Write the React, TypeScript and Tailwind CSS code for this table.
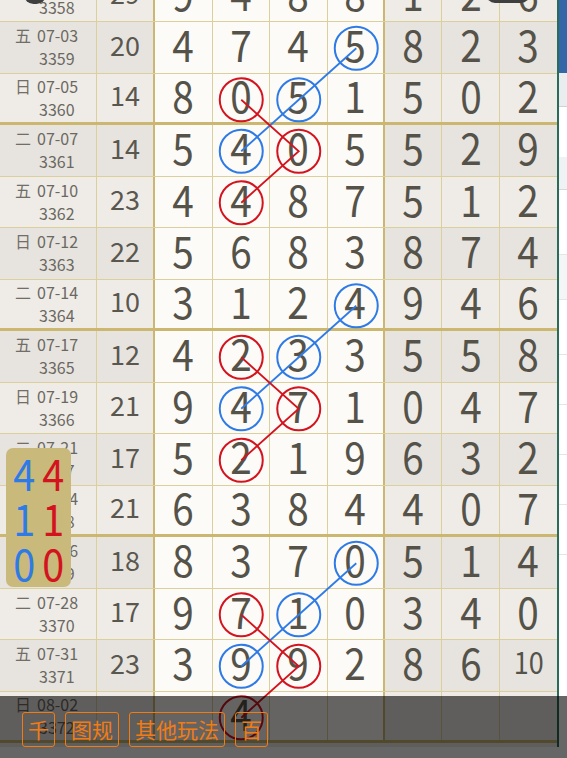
const ROW_H = 51.5;

type Row = { w: string; d: string; n: string; s: string; v: string[] };

const rows: Row[] = [
  { w: "二", d: "06-30", n: "3358", s: "29", v: ["9", "4", "8", "8", "1", "2", "6"] },
  { w: "五", d: "07-03", n: "3359", s: "20", v: ["4", "7", "4", "5", "8", "2", "3"] },
  { w: "日", d: "07-05", n: "3360", s: "14", v: ["8", "0", "5", "1", "5", "0", "2"] },
  { w: "二", d: "07-07", n: "3361", s: "14", v: ["5", "4", "0", "5", "5", "2", "9"] },
  { w: "五", d: "07-10", n: "3362", s: "23", v: ["4", "4", "8", "7", "5", "1", "2"] },
  { w: "日", d: "07-12", n: "3363", s: "22", v: ["5", "6", "8", "3", "8", "7", "4"] },
  { w: "二", d: "07-14", n: "3364", s: "10", v: ["3", "1", "2", "4", "9", "4", "6"] },
  { w: "五", d: "07-17", n: "3365", s: "12", v: ["4", "2", "3", "3", "5", "5", "8"] },
  { w: "日", d: "07-19", n: "3366", s: "21", v: ["9", "4", "7", "1", "0", "4", "7"] },
  { w: "二", d: "07-21", n: "3367", s: "17", v: ["5", "2", "1", "9", "6", "3", "2"] },
  { w: "五", d: "07-24", n: "3368", s: "21", v: ["6", "3", "8", "4", "4", "0", "7"] },
  { w: "日", d: "07-26", n: "3369", s: "18", v: ["8", "3", "7", "0", "5", "1", "4"] },
  { w: "二", d: "07-28", n: "3370", s: "17", v: ["9", "7", "1", "0", "3", "4", "0"] },
  { w: "五", d: "07-31", n: "3371", s: "23", v: ["3", "9", "9", "2", "8", "6", "10"] },
  { w: "日", d: "08-02", n: "3372", s: "", v: ["", "4", "", "", "", "", ""] },
];

const RED = "#d3141f";
const BLUE = "#2f7be6";

// [row, digit column, colour]
const marks: [number, number, string][] = [
  [1, 3, BLUE], [2, 1, RED], [2, 2, BLUE], [3, 1, BLUE], [3, 2, RED], [4, 1, RED],
  [6, 3, BLUE], [7, 1, RED], [7, 2, BLUE], [8, 1, BLUE], [8, 2, RED], [9, 1, RED],
  [11, 3, BLUE], [12, 1, RED], [12, 2, BLUE], [13, 1, BLUE], [13, 2, RED], [14, 1, RED],
];

const links: { c: string; pts: [number, number][] }[] = [
  { c: BLUE, pts: [[1, 3], [2, 2], [3, 1]] },
  { c: RED, pts: [[2, 1], [3, 2], [4, 1]] },
  { c: BLUE, pts: [[6, 3], [7, 2], [8, 1]] },
  { c: RED, pts: [[7, 1], [8, 2], [9, 1]] },
  { c: BLUE, pts: [[11, 3], [12, 2], [13, 1]] },
  { c: RED, pts: [[12, 1], [13, 2], [14, 1]] },
];

const cx = (c: number) => 155 + 57.5 * c + 28.75;
const cy = (r: number) => ROW_H * r + 25.75;

function TableRow({ row, i }: { row: Row; i: number }) {
  const dark = i % 2 === 1;
  const grey = dark ? "bg-[#e7e4e0]" : "bg-[#efece8]";
  const thick = i % 4 === 2;
  return (
    <div
      className={`grid h-[51.5px] grid-rows-1 grid-cols-[97px_58px_57.5px_57.5px_57.5px_57.5px_57.33px_57.33px_57.34px] ${
        thick ? "border-b-[3px] border-b-[#cbb76f]" : "border-b border-b-[#dbcf9c]"
      }`}
    >
      <div className={`flex flex-col justify-center border-r border-r-[#dbcf9c] pl-[15px] text-[16px] leading-[23px] text-[#6b6861] ${grey}`}>
        <div className="flex items-center gap-[6px]">
          <span className="text-[16px] text-[#716e67]">{row.w}</span>
          <span>{row.d}</span>
        </div>
        <div className="pl-[24px]">{row.n}</div>
      </div>
      <div className={`flex items-center justify-center border-r-2 border-r-[#cbb76f] pb-[5px] text-[27px] leading-[34px] text-[#5a574f] ${grey}`}>
        {row.s}
      </div>
      {row.v.map((d, j) => (
        <div
          key={j}
          className={`flex items-center justify-center pb-[8px] ${
            j === 3 ? "border-r-2 border-r-[#cbb76f]" : j === 6 ? "" : "border-r border-r-[#dbcf9c]"
          } ${j < 4 ? "bg-[#fdfbf8]" : grey}`}
        >
          <span
            className={`inline-block scale-x-[0.9] leading-[40px] text-[#555349] ${
              d.length > 1 ? "text-[30px]" : "text-[43px]"
            }`}
          >
            {d}
          </span>
        </div>
      ))}
    </div>
  );
}

export default function App() {
  return (
    <div className="relative h-[758px] w-[567px] overflow-hidden bg-[#efece8] font-['Noto_Sans_CJK_SC','Noto_Sans',sans-serif]">
      <div className="flex h-full">
        {/* chart */}
        <div className="relative w-[557px] shrink-0">
          <div className="relative -mt-[29.5px]">
            {rows.map((r, i) => (
              <TableRow key={r.n} row={r} i={i} />
            ))}
            <svg className="absolute left-0 top-0" width={557} height={ROW_H * rows.length}>
              {links.map((l, k) => (
                <polyline
                  key={k}
                  points={l.pts.map(([r, c]) => `${cx(c)},${cy(r)}`).join(" ")}
                  fill="none"
                  stroke={l.c}
                  strokeWidth={1.8}
                />
              ))}
              {marks.map(([r, c, col], k) => (
                <circle key={k} cx={cx(c)} cy={cy(r)} r={21.5} fill="none" stroke={col} strokeWidth={2} />
              ))}
            </svg>
          </div>
        </div>
        {/* page behind, right edge */}
        <div className="flex w-[10px] shrink-0 flex-col border-l-2 border-l-[#2b6b59] bg-white">
          <div className="h-[73px] shrink-0 bg-[#3467a8]" />
          <div className="h-[34px] shrink-0 border-b border-b-[#cfd3d7] bg-[#e9edf0]" />
          <div className="h-[50px] shrink-0 bg-white" />
          <div className="h-[33px] shrink-0 border-b border-b-[#d5d9dd] bg-[#eef2f5]" />
          <div className="h-[65px] shrink-0 border-b border-b-[#e3e6e9] bg-white" />
          <div className="h-[45px] shrink-0 border-b border-b-[#e3e6e9] bg-[#f3f5f7]" />
          <div className="h-[55px] shrink-0 border-b border-b-[#e3e6e9] bg-white" />
          <div className="h-[50px] shrink-0 border-b border-b-[#e3e6e9] bg-white" />
          <div className="h-[50px] shrink-0 border-b border-b-[#e3e6e9] bg-white" />
          <div className="h-[50px] shrink-0 border-b border-b-[#e3e6e9] bg-white" />
          <div className="h-[50px] shrink-0 border-b border-b-[#e3e6e9] bg-white" />
          <div className="flex-1 bg-white" />
        </div>
      </div>

      {/* cut-off floating shapes at the top */}
      <div className="absolute left-[24px] top-[-15px] h-[19px] w-[22px] rounded-full bg-[#3f3f3f]" />
      <div className="absolute left-[486px] top-[-15px] h-[18px] w-[44px] rounded-full bg-[#3f3f3f]" />

      {/* count badge */}
      <div className="absolute left-[6px] top-[448px] grid h-[139px] w-[65px] grid-cols-2 grid-rows-3 rounded-[7px] bg-[#c9b97b] px-[4px] py-[2px] text-center">
        {["4", "4", "1", "1", "0", "0"].map((d, k) => (
          <span
            key={k}
            className={`inline-block scale-x-[0.9] text-[44px] leading-[45px] ${k % 2 === 0 ? "text-[#2f7be6]" : "text-[#d3141f]"}`}
          >
            {d}
          </span>
        ))}
      </div>

      {/* bottom bar */}
      <div className="absolute bottom-0 left-0 flex h-[62px] w-[567px] flex-col bg-black/60">
        <div className="flex flex-1 items-start gap-[10px] pl-[22px] pt-[16px]">
          {["千", "图规", "其他玩法", "百"].map((t) => (
            <div
              key={t}
              className="rounded-[3px] border border-[#f27c12] px-[5px] text-[21px] leading-[33px] text-[#f27c12]"
            >
              {t}
            </div>
          ))}
        </div>
        <div className="h-[11px] bg-[#666666]" />
      </div>
    </div>
  );
}
